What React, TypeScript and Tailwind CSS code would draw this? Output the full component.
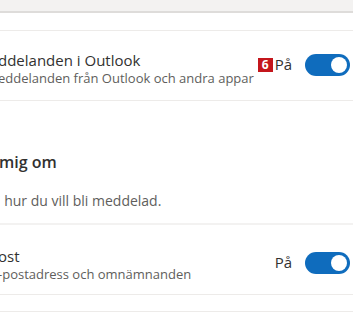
import React from 'react'

const Toggle = () => (
  <div className="relative h-[22px] w-[45px] shrink-0 rounded-full bg-[#0f6cbd]">
    <div className="absolute right-[3px] top-[3px] h-[16px] w-[16px] rounded-full bg-white" />
  </div>
)

const SettingRow = ({
  title,
  sub,
  badge,
  textOffset,
  toggleOffset,
}: {
  title: string
  sub: string
  badge?: string
  textOffset: string
  toggleOffset: string
}) => (
  <div className="flex h-[70px] items-center justify-between border-b border-[#edebe9] pr-[3px]">
    <div className={`-ml-[2px] flex flex-col ${textOffset}`}>
      <span className="text-[15px] leading-[19px] text-[#323130]">{title}</span>
      <span className="text-[13px] leading-[17px] text-[#605e5c]">{sub}</span>
    </div>
    <div className={`flex items-center ${toggleOffset}`}>
      {badge && (
        <span className="mr-[2px] flex h-[14px] w-[15px] items-center justify-center bg-[#c4161c] text-[12px] font-bold leading-none text-white">
          {badge}
        </span>
      )}
      <span className="mr-[13px] text-[15px] text-[#323130]">På</span>
      <Toggle />
    </div>
  </div>
)

export default function App() {
  return (
    <div className="h-[335px] w-[353px] overflow-hidden bg-white font-['Open_Sans',sans-serif]">
      <div className="h-[13px] border-b-2 border-[#dedcda] bg-[#f3f2f1]" />
      <div className="h-[18px] border-b border-[#edebe9]" />
      <SettingRow
        title="ddelanden i Outlook"
        sub="eddelanden från Outlook och andra appar"
        badge="6"
        textOffset="mt-[6px]"
        toggleOffset="-mt-[2px]"
      />
      <div className="h-[124px] border-b-2 border-[#f3f2f1] pt-[51px]">
        <div className="-ml-[1px] text-[16px] font-semibold leading-[20px] text-[#323130]">mig om</div>
        <div className="mt-[20px] -ml-[3px] text-[14px] leading-[18px] text-[#605e5c]">j hur du vill bli meddelad.</div>
      </div>
      <SettingRow
        title="ost"
        sub="-postadress och omnämnanden"
        textOffset="mt-[10px]"
        toggleOffset="mt-[6px]"
      />
      <div className="h-[17px] border-b border-[#edebe9]" />
    </div>
  )
}
